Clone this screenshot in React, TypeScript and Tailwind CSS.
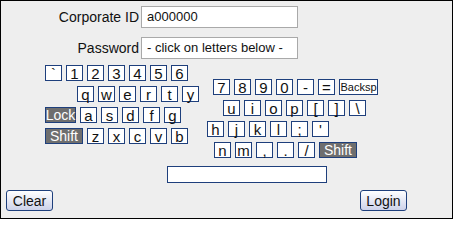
import type { ReactNode } from 'react'

type KeyDef = { label: string; w?: string; dark?: boolean; small?: boolean }

const k = (labels: string) => labels.split(' ').map((label) => ({ label }))

const leftRows: { pad: string; keys: KeyDef[] }[] = [
  { pad: 'pl-0', keys: k('` 1 2 3 4 5 6') },
  { pad: 'pl-[32px]', keys: k('q w e r t y') },
  { pad: 'pl-0', keys: [{ label: 'Lock', w: 'w-[31px]', dark: true }, ...k('a s d f g')] },
  { pad: 'pl-0', keys: [{ label: 'Shift', w: 'w-[38px]', dark: true }, ...k('z x c v b')] },
]

const rightRows: { pad: string; keys: KeyDef[] }[] = [
  { pad: 'pl-[6px]', keys: [...k('7 8 9 0 - ='), { label: 'Backsp', w: 'w-[39px]', small: true }] },
  { pad: 'pl-[16px]', keys: k('u i o p [ ] \\') },
  { pad: 'pl-0', keys: k("h j k l ; '") },
  { pad: 'pl-[7px]', keys: [...k('n m , . /'), { label: 'Shift', w: 'w-[38px]', dark: true }] },
]

function Key({ label, w = 'w-[17px]', dark, small }: KeyDef) {
  return (
    <button
      type="button"
      className={`flex h-[16px] ${w} items-center justify-center border border-[#1e3f7c] leading-none ${
        dark ? 'bg-[#6e6e6e] text-[14px] text-white' : 'bg-white text-[#111]'
      } ${small ? 'text-[11px]' : dark ? '' : 'text-[15px]'}`}
    >
      {label}
    </button>
  )
}

function KeyBlock({ rows, className }: { rows: { pad: string; keys: KeyDef[] }[]; className?: string }) {
  return (
    <div className={`flex flex-col gap-[5px] ${className ?? ''}`}>
      {rows.map((row, i) => (
        <div key={i} className={`flex gap-[4px] ${row.pad}`}>
          {row.keys.map((key, j) => (
            <Key key={j} {...key} />
          ))}
        </div>
      ))}
    </div>
  )
}

function FieldRow({ label, children }: { label: string; children: ReactNode }) {
  return (
    <div className="flex items-center">
      <span className="w-[140px] pr-[2px] text-right text-[14px] text-[#111]">{label}</span>
      {children}
    </div>
  )
}

function PlainButton({ children }: { children: ReactNode }) {
  return (
    <button
      type="button"
      className="h-[21px] w-[47px] rounded-[3px] border border-[#1e3f7c] bg-gradient-to-b from-white to-[#cdd2ea] text-[14px] leading-none text-[#111]"
    >
      {children}
    </button>
  )
}

export default function App() {
  return (
    <div
      className="flex h-[219px] w-[453px] flex-col border border-black bg-[#eeeeee]"
      style={{ fontFamily: '"Liberation Sans", Arial, sans-serif' }}
    >
      <div className="flex flex-col gap-[9px] pt-[5px]">
        <FieldRow label="Corporate ID">
          <div className="flex h-[22px] w-[157px] items-center border border-[#a9a9a9] bg-white px-[5px] text-[13px] text-[#111]">
            a000000
          </div>
        </FieldRow>
        <FieldRow label="Password">
          <div className="flex h-[22px] w-[157px] items-center border border-[#a9a9a9] bg-white px-[5px] text-[13px] text-[#111]">
            - click on letters below -
          </div>
        </FieldRow>
      </div>

      <div className="mt-[6px] flex pl-[44px]">
        <KeyBlock rows={leftRows} />
        <KeyBlock rows={rightRows} className="ml-[8px] mt-[14px]" />
      </div>

      <div className="mt-[8px] flex pl-[166px]">
        <div className="h-[17px] w-[160px] border border-[#1e3f7c] bg-white" />
      </div>

      <div className="mt-[7px] flex justify-between pl-[5px] pr-[45px]">
        <PlainButton>Clear</PlainButton>
        <PlainButton>Login</PlainButton>
      </div>
    </div>
  )
}
